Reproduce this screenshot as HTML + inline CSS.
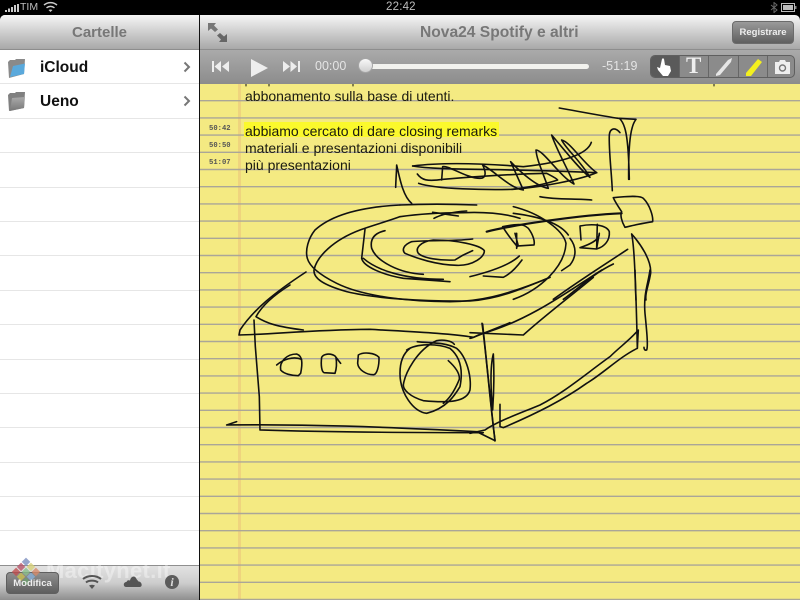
<!DOCTYPE html>
<html><head><meta charset="utf-8">
<style>
html,body{margin:0;padding:0;width:800px;height:600px;overflow:hidden;background:#000;font-family:"Liberation Sans",sans-serif}
.a{position:absolute}
#side{left:0;top:15px;width:199px;height:585px;background:#fff;border-radius:5px 0 0 0;overflow:hidden}
#h1{left:0;top:15px;width:199px;height:35px;background:linear-gradient(#f6f6f6,#dedede 30%,#a8a8a8);border-bottom:1px solid #8d8d8d;box-sizing:border-box;border-radius:5px 0 0 0;color:#777;font-weight:bold;font-size:15px;text-align:center;line-height:36px}
#h2{left:200px;top:15px;width:600px;height:35px;background:linear-gradient(#f6f6f6,#dedede 30%,#a8a8a8);border-bottom:1px solid #8d8d8d;box-sizing:border-box;border-radius:0 5px 0 0;color:#777;font-weight:bold;font-size:15.6px;line-height:36px}
#tb{left:200px;top:50px;width:600px;height:34px;background:linear-gradient(#aaa,#8c8c8c)}
.row{left:0;width:199px;height:34px;font-weight:bold;font-size:15.5px;color:#111;line-height:34px}
.ln{left:0;width:199px;height:1px;background:#e6e6e6}
.t{left:245px;font-size:14px;color:#1a1a10;white-space:nowrap;line-height:16px}
.ts{left:209px;font:bold 7.2px "Liberation Mono",monospace;color:#555;white-space:nowrap}
</style></head><body>
<div class="a" style="left:0;top:0;width:800px;height:15px;background:#000;color:#bdbdbd;font-size:10.5px;line-height:15px">
<svg class="a" style="left:5px;top:3px" width="14" height="9"><path d="M1 9V7M4 9V5.5M7 9V4M10 9V2M13 9V1" stroke="#ccc" stroke-width="2"/></svg>
<span class="a" style="left:20px;top:0">TIM</span>
<svg class="a" style="left:43px;top:1px" width="15" height="12" fill="none" stroke="#ccc" stroke-width="1.5"><path d="M1 4C5 .8 10 .8 14 4M3.500 6.800C6 5 9 5 11.500 6.800"/><path d="M7.500 11L5.500 9Q7.500 8 9.500 9Z" fill="#ccc" stroke="none"/></svg>
<span class="a" style="left:386px;top:0;font-size:11.5px;letter-spacing:.2px">22:42</span>
<svg class="a" style="left:770px;top:2px" width="9" height="11" fill="none" stroke="#666" stroke-width="1"><path d="M1 3L7 8L4 10.500V.5L7 3L1 8"/></svg>
<svg class="a" style="left:781px;top:3px" width="16" height="9"><rect x=".5" y=".5" width="13" height="8" fill="none" stroke="#bbb"/><rect x="2" y="2" width="10" height="5" fill="#bbb"/><rect x="14" y="3" width="1.500" height="3" fill="#888"/></svg>
</div>
<div class="a" id="side"></div>
<div class="a" id="h1">Cartelle</div>
<div class="a" style="left:199px;top:15px;width:1px;height:585px;background:#111"></div>

<div class="a row" style="top:50px;background:#fff"><span class="a" style="left:40px;top:1px">iCloud</span></div>
<div class="a row" style="top:85px;background:#fff"><span class="a" style="left:40px">Ueno</span></div>
<svg class="a" style="left:7px;top:57px" width="20" height="54">
<defs><linearGradient id="f" x1="0" y1="0" x2="0" y2="1"><stop offset="0" stop-color="#aaa"/><stop offset="1" stop-color="#777"/></linearGradient></defs>
<path d="M1 5L3 3H8L9 2H18L17 17L2 21Z" fill="#8a8a8a"/><path d="M3 20L6 9L18 6.500L17 17Z" fill="#5aa9dc"/>
<path d="M1 38L3 36H8L9 35H18L17 51L2 54Z" fill="#808080"/><path d="M3 54L5 41L18 40L17 51Z" fill="url(#f)"/>
</svg>
<svg class="a" style="left:183px;top:61px" width="10" height="50" fill="none" stroke="#777" stroke-width="2"><path d="M1.500 1.500L6 6L1.500 10.500M1.500 35.500L6 40L1.500 44.500"/></svg>

<div class="a ln" style="top:83px"></div><div class="a ln" style="top:118px"></div><div class="a ln" style="top:152px"></div><div class="a ln" style="top:187px"></div><div class="a ln" style="top:221px"></div><div class="a ln" style="top:255px"></div><div class="a ln" style="top:290px"></div><div class="a ln" style="top:324px"></div><div class="a ln" style="top:359px"></div><div class="a ln" style="top:393px"></div><div class="a ln" style="top:427px"></div><div class="a ln" style="top:462px"></div><div class="a ln" style="top:496px"></div><div class="a ln" style="top:530px"></div>

<div class="a" style="left:0;top:565px;width:199px;height:35px;background:linear-gradient(#e2e2e2,#cdcdcd 50%,#8e8e8e);border-top:1px solid #8f8f8f;box-sizing:border-box"></div>
<div class="a" style="left:46px;top:558px;font-size:22px;font-weight:bold;color:rgba(255,255,255,.38);white-space:nowrap;letter-spacing:.3px">Macitynet.it</div>
<div class="a" style="left:6px;top:572px;width:53px;height:22px;box-sizing:border-box;border:1px solid #5f5f5f;border-radius:4px;background:linear-gradient(#8f8f8f,#5e5e5e)"></div>
<svg class="a" style="left:10px;top:553px;opacity:.8" width="32" height="32">
<g transform="rotate(45 16 16)"><rect x="8" y="8" width="6" height="6" fill="#7d8fc0"/><rect x="15" y="8" width="6" height="6" fill="#d8d27a"/><rect x="22" y="8" width="6" height="6" fill="#d88a6a"/><rect x="8" y="15" width="6" height="6" fill="#b8556a"/><rect x="15" y="15" width="6" height="6" fill="#8abf8a"/><rect x="22" y="15" width="6" height="6" fill="#8ab0d8"/><rect x="8" y="22" width="6" height="6" fill="#c05050"/><rect x="15" y="22" width="6" height="6" fill="#c9bf50"/><rect x="22" y="22" width="6" height="6" fill="#70a070"/></g>
</svg>
<div class="a" style="left:6px;top:572px;width:53px;height:22px;color:#eee;font-weight:bold;font-size:9.500px;line-height:23px;text-align:center">Modifica</div>
<svg class="a" style="left:82px;top:574px" width="20" height="16" fill="none" stroke="#555" stroke-width="2"><path d="M1 5C6 1 14 1 19 5M4 8.500C7 6 13 6 16 8.500"/><path d="M10 15L7 11.500Q10 10 13 11.500Z" fill="#555" stroke="none"/></svg>
<svg class="a" style="left:123px;top:574px" width="20" height="14"><path d="M3 13C0 13 0 8 3.500 8C4 6 6 6 7 6.500C8 2 12 1 13.500 5C14 6 15 6.500 15.500 7.500C19 7.500 20 13 16.500 13Z" fill="#555"/></svg>
<div class="a" style="left:165px;top:575px;width:14px;height:14px;border-radius:50%;background:#5c5c5c;color:#ddd;font:italic bold 12px/14px 'Liberation Serif',serif;text-align:center">i</div>

<div class="a" style="left:200px;top:84px;width:600px;height:516px;background:#f4ea82"></div>
<div class="a" style="left:238px;top:84px;width:3px;height:516px;background:#efd47e"></div>
<svg class="a" style="left:200px;top:84px" width="600" height="516" stroke="#aaa698" stroke-width="1.400">
<path d="M0 16.700H600M0 33.900H600M0 51.100H600M0 68.300H600M0 85.500H600M0 102.700H600M0 119.900H600M0 137.100H600M0 154.300H600M0 171.500H600M0 188.700H600M0 205.900H600M0 223.100H600M0 240.300H600M0 257.500H600M0 274.700H600M0 291.900H600M0 309.100H600M0 326.300H600M0 343.500H600M0 360.700H600M0 377.900H600M0 395.100H600M0 412.300H600M0 429.500H600M0 446.700H600M0 463.900H600M0 481.100H600M0 498.300H600M0 515.500H600"/>
</svg>
<div class="a" style="left:244px;top:122px;width:255px;height:15px;background:#fbf92c"></div>

<svg class="a" style="left:0;top:0" width="800" height="600" fill="none" stroke="#111" stroke-linecap="round" stroke-linejoin="round">
<path d="M246 84v2M269 84v2M353 84v2M714 84v2" stroke-width="1"/>
<g transform="translate(380 100) scale(.3333)" stroke-width="4.800">
<path d="M538 24C600 35 680 50 715 55L768 58M718 55C735 70 745 100 748 238M768 58C755 75 745 110 746 238"/>
<path d="M720 98C705 80 690 85 688 105C686 150 695 220 697 272"/>
<path d="M98 198C200 185 330 192 430 200C520 190 620 170 634 127"/>
<path d="M98 198C170 212 400 205 650 218"/>
<path d="M112 222C125 240 140 245 190 238C260 232 400 222 500 220C515 228 530 235 533 240C480 258 420 265 395 268"/>
<path d="M116 250C170 268 320 270 400 268C480 262 600 240 650 218"/>
<path d="M185 240L188 200C205 195 260 235 300 235C320 235 318 215 308 195C340 210 390 265 430 270L392 185C420 215 470 260 505 265C490 220 470 180 468 150C490 150 540 230 582 252C560 200 530 150 515 105C545 140 600 210 630 232C600 180 560 150 545 120C570 125 610 190 650 218"/>
<path d="M480 290C530 300 590 295 635 300M47 262C48 230 50 210 50 195C60 240 70 290 95 310"/>
<path d="M700 293C730 290 780 285 790 295C810 315 820 350 818 365C790 370 760 375 735 382C725 365 720 345 725 335C715 320 705 305 700 293Z"/>
<path d="M320 395C400 375 600 345 725 340" stroke-width="6.500"/>
<path d="M368 380C420 370 430 372 445 385C460 405 465 425 462 435L415 438L405 400M368 380C380 400 395 420 412 440M410 400V445"/>
<path d="M600 378C640 370 680 375 688 395C690 420 675 440 650 447L600 443C625 435 660 420 658 400L650 445L652 373M600 378L603 420"/>
<path d="M755 402C780 430 815 480 812 520C805 560 795 580 798 600M755 402C765 450 765 540 768 600"/>
<path d="M570 415C590 440 590 470 570 495L545 512"/>
<path d="M743 448C680 490 600 540 520 598M700 492C640 520 590 570 550 598"/>
<path d="M400 320C480 340 550 390 558 430C555 500 480 570 400 598M400 340C480 350 540 370 565 405"/>
</g>
<g transform="translate(290 190) scale(.3333)" stroke-width="4.800">
<path d="M330 45C230 50 130 70 75 120C55 145 45 180 52 205C60 235 100 260 140 280C220 320 360 335 480 335C560 335 640 320 780 262"/>
<path d="M330 80C290 95 250 105 210 120C130 150 80 200 72 240C70 265 100 285 170 305C250 325 400 335 540 333C620 328 690 300 780 262"/>
<path d="M330 45C400 42 480 42 560 45M330 80C400 70 460 68 520 68C600 65 650 72 690 85"/>
<path d="M428 67C450 70 480 75 505 78M432 85C460 70 500 65 530 63"/>
<path d="M225 118L215 205C220 230 280 255 340 265L480 275M285 122C250 130 240 150 245 175C260 215 330 250 400 253M220 205C260 240 340 268 460 268"/>
<path d="M548 147C480 155 400 150 365 155C340 165 335 180 345 190C380 205 440 225 500 226C550 228 585 200 583 182C570 165 500 150 430 150C390 155 375 175 385 190C400 205 450 212 495 210L520 195L548 182"/>
<path d="M540 260C600 245 660 225 688 198M580 258L640 262C665 250 685 225 696 210"/>
</g>
<g transform="translate(470 270) scale(.3333)" stroke-width="4.800">
<path d="M395 0C300 60 180 150 40 190C20 195 10 205 0 205M370 22C300 80 220 140 160 195L0 188"/>
<path d="M36 160C50 260 60 400 75 510M70 252C60 290 62 360 68 420C72 360 72 290 70 252"/>
<path d="M90 403L90 470L100 473C200 430 280 390 350 340C400 310 450 260 502 235L505 180C480 210 450 230 420 260C350 310 280 370 210 405C150 430 80 455 45 480L0 490"/>
<path d="M495 0C497 60 500 130 502 235M540 0C535 40 520 70 525 130C530 180 535 230 530 240C525 242 522 238 522 232"/>
</g>
<g transform="translate(210 280) scale(.3333)" stroke-width="4.800">
<path d="M288 -24C190 40 130 90 90 150L87 165C200 162 300 150 480 148C600 155 720 160 790 172L820 160L900 128"/>
<path d="M240 15C200 40 160 70 138 110C170 130 200 140 280 150"/>
<path d="M132 120L136 200L148 350L150 450C300 455 550 458 820 458"/>
<path d="M50 435L80 425M50 435C300 432 500 440 800 455L855 482"/>
<path d="M818 132C825 200 840 350 855 483"/>
<path d="M212 270C208 245 230 222 260 222C278 228 278 250 272 280L265 287C245 287 222 282 212 270ZM200 255C220 238 250 228 275 238"/>
<path d="M335 232C340 222 360 218 375 228L392 250M335 232C332 255 335 275 342 278L375 280C380 265 380 245 378 232"/>
<path d="M445 225C460 215 495 218 507 232C508 260 500 282 492 284C470 285 445 270 443 250Z"/>
<path d="M622 185C660 190 700 185 740 205C770 230 785 290 780 330C770 365 720 370 640 362C600 350 580 330 580 315C585 280 620 210 680 182C700 178 725 182 733 193"/>
<path d="M590 210C620 190 680 190 720 205C750 230 760 270 750 320C735 345 710 385 650 400C610 395 570 340 570 280C570 245 580 220 600 205"/>
<path d="M715 242C735 260 750 280 748 298C735 330 720 355 700 370"/>
</g>
</svg>

<div class="a t" style="top:88px">abbonamento sulla base di utenti.</div>
<div class="a t" style="top:123px">abbiamo cercato di dare closing remarks</div>
<div class="a t" style="top:140px">materiali e presentazioni disponibili</div>
<div class="a t" style="top:157px">più presentazioni</div>
<div class="a ts" style="top:125px">50:42</div>
<div class="a ts" style="top:142px">50:50</div>
<div class="a ts" style="top:159px">51:07</div>

<div class="a" id="h2"><span class="a" style="left:220px;top:0;white-space:nowrap">Nova24 Spotify e altri</span>
<svg class="a" style="left:8px;top:8px" width="20" height="20" fill="#777"><path d="M0 0H8L6 2.500L10 6.500L7 9L3 5.500L0 8Z"/><path d="M19 19H11L13 16.500L9 12.500L12 10L16 13.500L19 11Z" fill="#666"/></svg>
<div class="a" style="left:532px;top:6px;width:62px;height:23px;box-sizing:border-box;border:1px solid #6b6b6b;border-radius:4px;background:linear-gradient(#9a9a9a,#5f5f5f);color:#eee;font-size:9.500px;line-height:21px;text-align:center">Registrare</div>
</div>
<div class="a" id="tb"></div>
<svg class="a" style="left:210px;top:58px" width="95" height="20" fill="#eee">
<rect x="2" y="3" width="2" height="11"/><path d="M11 3V14L4.500 8.500ZM19 3V14L12 8.500Z"/>
<path d="M41 1V19L58 10Z"/>
<path d="M73 3V14L80 8.500ZM80.500 3V14L87 8.500Z"/><rect x="88" y="3" width="2" height="11"/>
</svg>
<div class="a" style="left:315px;top:59px;color:#e4e4e4;font-size:12.500px">00:00</div>
<div class="a" style="left:365px;top:64px;width:224px;height:5px;border-radius:3px;background:#f2f2ee"></div>
<div class="a" style="left:358px;top:58px;width:15px;height:15px;border-radius:50%;background:linear-gradient(#f8f8f8,#cfcfcf);border:1px solid #a5a5a5;box-sizing:border-box"></div>
<div class="a" style="left:602px;top:59px;color:#e4e4e4;font-size:12.500px">-51:19</div>
<div class="a" style="left:650px;top:55px;width:145px;height:23px;box-sizing:border-box;border:1px solid #5f5f5f;border-radius:5px;background:#8b8b8b;overflow:hidden">
<div class="a" style="left:0;top:0;width:28px;height:21px;background:#5a5a5a"></div>
<div class="a" style="left:28px;top:0;width:1px;height:21px;background:#666"></div>
<div class="a" style="left:57px;top:0;width:1px;height:21px;background:#666"></div>
<div class="a" style="left:87px;top:0;width:1px;height:21px;background:#666"></div>
<div class="a" style="left:116px;top:0;width:1px;height:21px;background:#666"></div>
<div class="a" style="left:35px;top:-3px;color:#eee;font:bold 23px/26px 'Liberation Serif',serif">T</div>
<svg class="a" style="left:0;top:0" width="145" height="21">
<path d="M11 3Q12 1.500 13 3L14 9L19 10L20 15L17 20H12L7 14L6 11L9 12Z" fill="#fff"/>
<path d="M65 18L77 4L81 2L80 6L69 19L65 20Z" fill="#e6e6e6"/>
<path d="M95 17L107 3L111 6L100 20H95Z" fill="#f4f01e"/>
<path d="M124 6H128L129 4H134L135 6H139V18H124Z" fill="#eee"/><circle cx="131.500" cy="12" r="3" fill="none" stroke="#777" stroke-width="1.400"/>
</svg>
</div>
</body></html>
